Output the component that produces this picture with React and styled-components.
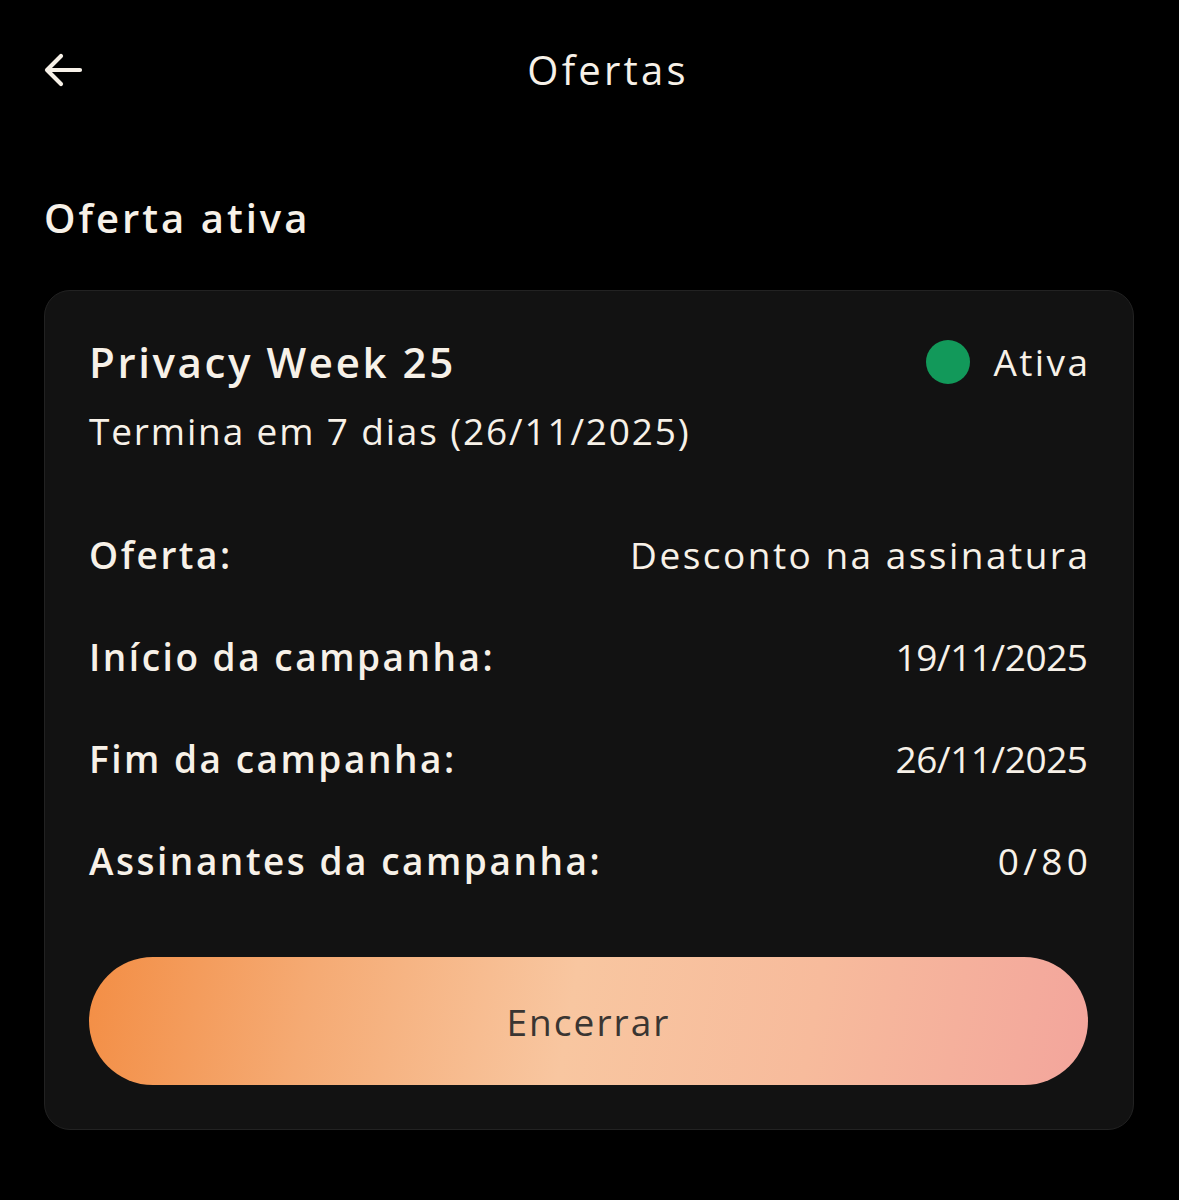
import React from "react";
import styled, { createGlobalStyle } from "styled-components";

const Global = createGlobalStyle`
  html, body { margin: 0; padding: 0; background: #000; }
  body {
    font-family: "Open Sans", "Noto Sans", sans-serif;
    color: #f7f1e8;
  }
  * { box-sizing: border-box; }
`;

const Page = styled.div`
  width: 1179px;
  min-height: 1200px;
  background: #000;
  padding: 0 45px 0 44px;
`;

const Header = styled.header`
  height: 140px;
  display: grid;
  grid-template-columns: 60px 1fr 22px;
  align-items: center;
`;

const BackButton = styled.button`
  width: 44px;
  height: 44px;
  padding: 0;
  border: 0;
  background: transparent;
  color: #f7f1e8;
  display: flex;
  align-items: center;
  justify-content: flex-start;
  cursor: pointer;
`;

const Title = styled.h1`
  margin: 0;
  text-align: center;
  font-size: 40px;
  font-weight: 400;
  line-height: 48px;
  letter-spacing: 0.08em;
  color: #f7f1e8;
`;

const SectionTitle = styled.h2`
  margin: 54px 0 48px;
  font-size: 40px;
  font-weight: 600;
  line-height: 48px;
  letter-spacing: 0.075em;
  color: #f7f1e8;
`;

const Card = styled.section`
  background: #121212;
  border: 1px solid #222;
  border-radius: 26px;
  padding: 47px 45px 44px 44px;
  display: flex;
  flex-direction: column;
`;

const CardHead = styled.div`
  display: flex;
  justify-content: space-between;
  align-items: center;
`;

const OfferName = styled.div`
  font-size: 42px;
  font-weight: 600;
  line-height: 48px;
  letter-spacing: 0.062em;
`;

const Status = styled.div`
  display: flex;
  align-items: center;
  gap: 23px;
  font-size: 37px;
  line-height: 48px;
  letter-spacing: 0.065em;
  margin-right: -0.065em;
`;

const Dot = styled.span`
  width: 44px;
  height: 44px;
  border-radius: 50%;
  background: ${(p) => p.$color};
`;

const Subtitle = styled.div`
  margin-top: 21px;
  font-size: 37px;
  line-height: 48px;
  letter-spacing: 0.05em;
`;

const Details = styled.dl`
  margin: 76px 0 0;
  display: flex;
  flex-direction: column;
  gap: 54px;
`;

const Row = styled.div`
  display: flex;
  justify-content: space-between;
  align-items: center;
  font-size: 37px;
  line-height: 48px;
`;

const Label = styled.dt`
  font-weight: 600;
  letter-spacing: 0.068em;
`;

const Value = styled.dd`
  margin: 0 calc(-1 * ${(p) => p.$ls}) 0 0;
  font-weight: 400;
  letter-spacing: ${(p) => p.$ls};
`;

const EndButton = styled.button`
  margin-top: 72px;
  height: 128px;
  border: 0;
  border-radius: 64px;
  background: linear-gradient(
    100deg,
    #f38e45 0%,
    #f5aa73 22%,
    #f8c6a0 48%,
    #f7bb9c 72%,
    #f3a59c 100%
  );
  font-family: inherit;
  font-size: 37px;
  font-weight: 500;
  letter-spacing: 0.055em;
  color: #3a3532;
  cursor: pointer;
`;

const rows = [
  ["Oferta:", "Desconto na assinatura", "0.067em"],
  ["Início da campanha:", "19/11/2025", "-0.012em"],
  ["Fim da campanha:", "26/11/2025", "-0.012em"],
  ["Assinantes da campanha:", "0/80", "0.12em"],
];

export default function App() {
  return (
    <>
      <Global />
      <Page>
        <Header>
          <BackButton aria-label="Voltar">
            <svg width="40" height="34" viewBox="0 0 40 34" fill="none">
              <path
                d="M36 17H4M17 3L3 17l14 14"
                stroke="currentColor"
                strokeWidth="4.2"
                strokeLinecap="round"
                strokeLinejoin="round"
              />
            </svg>
          </BackButton>
          <Title>Ofertas</Title>
          <span />
        </Header>
        <SectionTitle>Oferta ativa</SectionTitle>
        <Card>
          <CardHead>
            <OfferName>Privacy Week 25</OfferName>
            <Status>
              <Dot $color="#12995a" />
              Ativa
            </Status>
          </CardHead>
          <Subtitle>Termina em 7 dias (26/11/2025)</Subtitle>
          <Details>
            {rows.map(([l, v, ls]) => (
              <Row key={l}>
                <Label>{l}</Label>
                <Value $ls={ls}>{v}</Value>
              </Row>
            ))}
          </Details>
          <EndButton>Encerrar</EndButton>
        </Card>
      </Page>
    </>
  );
}
